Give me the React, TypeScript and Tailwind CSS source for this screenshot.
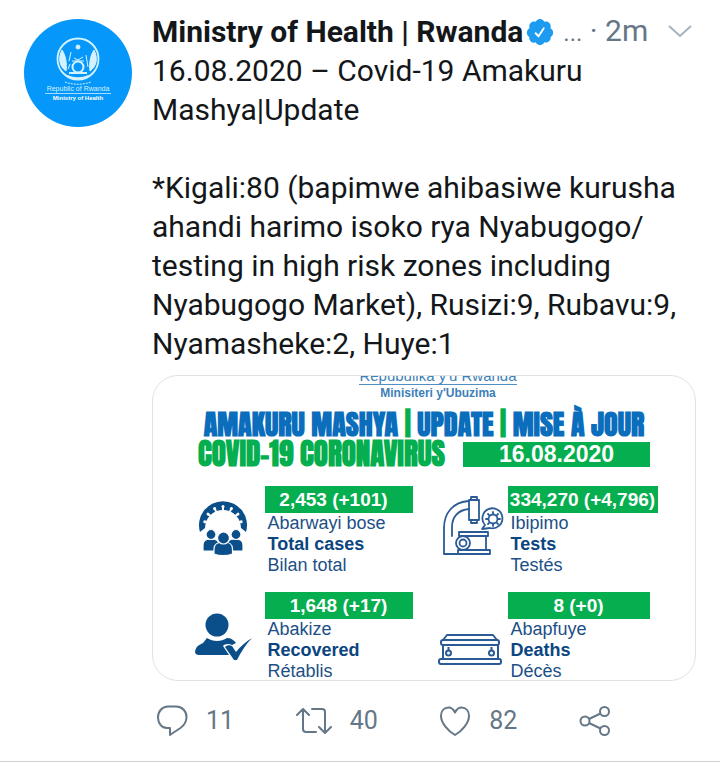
import type { ReactElement, ReactNode } from "react";

interface Stat {
  readonly id: string;
  readonly count: string;
  readonly barWidth: string;
  readonly kinyarwanda: string;
  readonly english: string;
  readonly french: string;
  readonly icon: ReactElement;
}

function IconFrame({ children }: { readonly children: ReactNode }): ReactElement {
  return (
    <svg aria-hidden="true" viewBox="0 0 70 84" className="h-[84px] w-[70px]" fill="none">
      {children}
    </svg>
  );
}

function CasesIcon(): ReactElement {
  const spikes = [-80, -54, -27, 0, 27, 54, 80];
  return (
    <IconFrame>
      <path d="M5 46a24 24 0 1 1 46 0l-5-4a18 18 0 1 0-36 0z" fill="#0b4f8a" />
      {spikes.map((angle) => (
        <g key={angle} transform={`rotate(${angle} 28 39)`}>
          <path d="M28 24v-3" stroke="#fff" strokeWidth="2" />
          <circle cx="28" cy="20.500" r="1.500" fill="#fff" />
        </g>
      ))}
      <g fill="#0b4f8a" stroke="#fff" strokeWidth="1.200">
        <path d="M8 65v-6c0-4 3-6 8-6s8 2 8 6v6zM32 65v-6c0-4 3-6 8-6s8 2 8 6v6z" />
        <circle cx="16" cy="48.500" r="5" />
        <circle cx="41" cy="48.500" r="5" />
        <path d="M19 68v-5c0-5 3-7 9.500-7s9 2 9 7v5c-6 2-13 2-18.500 0z" />
        <circle cx="28.500" cy="52" r="6" />
      </g>
    </IconFrame>
  );
}

function MicroscopeIcon(): ReactElement {
  return (
    <IconFrame>
      <g stroke="#2a5b96" strokeWidth="1.800" strokeLinejoin="round" strokeLinecap="round">
        <path d="M31 15C15 16 6 27 6 42v26h14M31 23c-11 1-17 8-17 18v9" />
        <path d="M31 14h10v20H31zM33 14v-3h6v3M33 34v3h6v-3" />
        <path d="M21 46h29v4H21zM24 50h24v14H24M20 64h32v4H20z" />
        <circle cx="25" cy="57" r="7" fill="#fff" />
        <circle cx="25" cy="57" r="3.500" />
        <path d="M44 43l3-4a10 10 0 1 1 5 3z" />
        <circle cx="55" cy="33" r="4.500" />
        <path d="M55 28v-2M55 40v-2M50 33h-2M62 33h-2M51 29l-1-1M60 38l-1-1M51 37l-1 1M60 28l-1 1" />
      </g>
    </IconFrame>
  );
}

function RecoveredIcon(): ReactElement {
  return (
    <IconFrame>
      <g fill="#0b4f8a">
        <circle cx="22" cy="33" r="11.500" />
        <path d="M12 46c6 4 14 4 20 0 4 0 7 2 9 5l-4 2c-3-2-8-1-9 1l6 9H4c-2 0-4-1-4-3 1-6 4-7 8-9z" />
        <path d="M30 55c2-2 5-2 7-1l4 6c4-5 9-10 16-14-6 6-11 14-15 22h-3z" />
      </g>
    </IconFrame>
  );
}

function CoffinIcon(): ReactElement {
  return (
    <IconFrame>
      <g stroke="#2a5b96" strokeWidth="2" strokeLinejoin="round">
        <path d="M9 43h46l4 5H5z" />
        <rect x="3" y="48" width="58" height="5" rx="2" />
        <path d="M5 53v14M60 53v14" />
        <rect x="1" y="67" width="62" height="5" rx="2" />
        <circle cx="10.500" cy="61" r="2.500" />
        <circle cx="53.500" cy="61" r="2.500" />
        <path d="M10.500 55v4M53.500 55v4" />
      </g>
    </IconFrame>
  );
}

const STATS: readonly Stat[] = [
  {
    id: "cases",
    count: "2,453 (+101)",
    barWidth: "w-[148px] pr-[10px]",
    kinyarwanda: "Abarwayi bose",
    english: "Total cases",
    french: "Bilan total",
    icon: <CasesIcon />,
  },
  {
    id: "tests",
    count: "334,270 (+4,796)",
    barWidth: "w-[150px]",
    kinyarwanda: "Ibipimo",
    english: "Tests",
    french: "Testés",
    icon: <MicroscopeIcon />,
  },
  {
    id: "recovered",
    count: "1,648 (+17)",
    barWidth: "w-[148px]",
    kinyarwanda: "Abakize",
    english: "Recovered",
    french: "Rétablis",
    icon: <RecoveredIcon />,
  },
  {
    id: "deaths",
    count: "8 (+0)",
    barWidth: "w-[142px]",
    kinyarwanda: "Abapfuye",
    english: "Deaths",
    french: "Décès",
    icon: <CoffinIcon />,
  },
];

function StatBlock({ stat }: { readonly stat: Stat }): ReactElement {
  return (
    <div className="flex h-[106px]">
      {stat.icon}
      <div className="text-[18px] leading-[21px] text-[#1c4f86]">
        <p
          className={`flex h-[27px] items-center justify-center bg-[#05ae4e] text-[19px] font-bold whitespace-nowrap text-white ${stat.barWidth}`}
        >
          {stat.count}
        </p>
        <p className="pl-[3px]">{stat.kinyarwanda}</p>
        <p className="pl-[3px] font-bold text-[#0b4580]">{stat.english}</p>
        <p className="pl-[3px]">{stat.french}</p>
      </div>
    </div>
  );
}

function Bulletin(): ReactElement {
  return (
    <section
      aria-label="Covid-19 bulletin"
      className="mt-3 flex h-[306px] flex-col items-center overflow-hidden rounded-[26px] border border-[#dfe3e6] font-['Liberation_Sans',Arial,sans-serif]"
    >
      <div className="ml-7 flex h-[9px] shrink-0 items-end overflow-hidden border-b border-[#4f8fc4] text-[15px] leading-[17px] text-[#3d7fb8]">
        Repubulika y'u Rwanda
      </div>
      <p className="ml-7 text-[12px] leading-4 font-bold text-[#3d7fb8]">Minisiteri y'Ubuzima</p>
      <h2 className="mt-2 font-[Impact,Anton,Oswald,sans-serif] text-[28px] leading-[30px] font-bold whitespace-nowrap text-[#0a6ebd]">
        AMAKURU MASHYA <span className="text-[#05ae4e]">|</span> UPDATE{" "}
        <span className="text-[#05ae4e]">|</span> MISE À JOUR
      </h2>
      <div className="flex w-[452px] items-center justify-between">
        <h3 className="font-[Impact,Anton,Oswald,sans-serif] text-[29px] leading-[30px] font-bold whitespace-nowrap text-[#05ae4e]">
          COVID-19 CORONAVIRUS
        </h3>
        <p className="w-[187px] bg-[#05ae4e] text-center text-[23px] leading-[25px] font-bold text-white">16.08.2020</p>
      </div>
      <div className="mt-[17px] ml-1 grid grid-cols-[218px_220px] gap-x-[25px]">
        {STATS.map((stat) => (
          <StatBlock key={stat.id} stat={stat} />
        ))}
      </div>
    </section>
  );
}

function Avatar(): ReactElement {
  return (
    <div className="mt-[7px] flex size-[108px] shrink-0 flex-col items-center rounded-full bg-[#0697fb] pt-[18px] font-['Liberation_Sans',Arial,sans-serif] whitespace-nowrap text-white">
      <svg aria-hidden="true" viewBox="0 0 48 48" className="size-12" fill="none" stroke="#d5f3ff">
        <circle cx="24" cy="22" r="20.500" strokeWidth="1.800" />
        <path d="M8 13c-4 8-3 16 4 21 1-7 0-15-4-21zM40 13c4 8 3 16-4 21-1-7 0-15 4-21z" fill="#d5f3ff" strokeWidth="1" />
        <path d="M13 39c7 3 15 3 22 0M15 36h18" strokeWidth="2" />
        <path d="M11 45c8 3 18 3 26 0" strokeWidth="1" strokeDasharray="2 1" />
        <circle cx="24" cy="10" r="2" fill="#d5f3ff" />
        <circle cx="24" cy="30" r="5.500" strokeWidth="2" />
        <path d="M18 24h12M20 21l4 2 5-3M16 27l-2 5M32 18l2 12M17 15l-2 9" strokeWidth="1" />
      </svg>
      <p className="border-b border-[#a6dcff] px-[2px] text-[7px] leading-2 text-[#d5f3ff]">Republic of Rwanda</p>
      <p className="text-[6px] leading-2 font-bold">Ministry of Health</p>
    </div>
  );
}

function VerifiedBadge(): ReactElement {
  return (
    <svg role="img" aria-label="Verified account" viewBox="0 0 24 24" className="ml-[2px] size-[30px] shrink-0">
      <path
        fill="#1d9bf0"
        d="M22.500 12.500c0-1.580-.875-2.950-2.148-3.600.154-.435.238-.905.238-1.400 0-2.210-1.710-3.998-3.818-3.998-.47 0-.92.084-1.336.250C14.818 2.415 13.510 1.500 12 1.500s-2.816.917-3.437 2.250c-.415-.165-.866-.250-1.336-.250-2.110 0-3.818 1.790-3.818 4 0 .494.083.964.237 1.400-1.272.650-2.147 2.018-2.147 3.600 0 1.495.782 2.798 1.942 3.486-.020.170-.032.340-.032.514 0 2.210 1.708 4 3.818 4 .470 0 .920-.086 1.335-.250.620 1.334 1.926 2.250 3.437 2.250 1.512 0 2.818-.916 3.437-2.250.415.163.865.248 1.336.248 2.110 0 3.818-1.790 3.818-4 0-.174-.012-.344-.033-.513 1.158-.687 1.943-1.990 1.943-3.484z"
      />
      <path d="M8.500 13l2.300 2.400L15 9" fill="none" stroke="#fff" strokeWidth="1.500" strokeLinecap="round" />
    </svg>
  );
}

interface ActionProps {
  readonly label: string;
  readonly count?: string;
  readonly children: ReactNode;
}

function Action({ label, count, children }: ActionProps): ReactElement {
  return (
    <button type="button" aria-label={label} className="flex items-center gap-[18px]">
      {children}
      {count && <span>{count}</span>}
    </button>
  );
}

function Actions(): ReactElement {
  return (
    <footer className="flex h-20 items-center justify-between pr-[85px] pl-1 text-[25px] leading-8 text-[#657786]">
      <Action label="Reply" count="11">
        <svg viewBox="0 0 32 32" className="size-8" fill="none" stroke="currentColor" strokeWidth="2" strokeLinejoin="round">
          <path d="M12 1.500h8c6 0 10.500 4.500 10.500 10.500 0 5-2 8-6 11-3 2-7 4.500-10.500 7v-7h-3C5.500 23 2 18 2 12.500 2 6.500 6 1.500 12 1.500z" />
        </svg>
      </Action>
      <Action label="Retweet" count="40">
        <svg viewBox="0 0 36 32" className="h-8 w-9" fill="none" stroke="currentColor" strokeWidth="2" strokeLinecap="round" strokeLinejoin="round">
          <path d="M1 10l6-6 6 6M7 4v20c0 2 1 3 3 3h10M16 4h10c2 0 3 1 3 3v20M23 22l6 6 6-6" />
        </svg>
      </Action>
      <Action label="Like" count="82">
        <svg viewBox="0 0 32 32" className="size-8" fill="none" stroke="currentColor" strokeWidth="2" strokeLinejoin="round">
          <path d="M16 30C9 26 2 18 2 11c0-5 3-8.500 7.500-8.500 3 0 5 2 6.500 5 1.500-3 3.500-5 6.500-5C27 2.500 30 6 30 11c0 7-7 15-14 19z" />
        </svg>
      </Action>
      <Action label="Share">
        <svg viewBox="0 0 32 32" className="size-8" fill="none" stroke="currentColor" strokeWidth="2">
          <circle cx="6" cy="16" r="4.500" />
          <circle cx="25.500" cy="6.500" r="4.500" />
          <circle cx="25.500" cy="25.500" r="4.500" />
          <path d="M10 14l11.500-5.500M10 18l11.500 5.500" />
        </svg>
      </Action>
    </footer>
  );
}

export default function App(): ReactElement {
  return (
    <main className="bg-white font-[Roboto,sans-serif] text-[#14171a]">
      <article className="flex gap-5 border-b border-[#cfd1d2] px-6 pt-3">
        <Avatar />
        <div className="min-w-0 flex-1">
          <header className="flex h-[39px] items-center text-[30px] leading-[39px] whitespace-nowrap">
            <h1 className="font-bold">Ministry of Health | Rwanda</h1>
            <VerifiedBadge />
            <span className="ml-2 text-[#657786]">
              <span className="text-[24px]">...</span> · 2m
            </span>
            <button type="button" aria-label="More options" className="ml-auto text-[#a5b3be]">
              <svg viewBox="0 0 32 20" className="h-5 w-8" fill="none" stroke="currentColor" strokeWidth="2">
                <path d="M5 4l11 10L27 4" />
              </svg>
            </button>
          </header>
          <p className="text-[30px] leading-[39px] whitespace-pre-line">
            {"16.08.2020 – Covid-19 Amakuru\nMashya|Update\n\n"}
            {"*Kigali:80 (bapimwe ahibasiwe kurusha\nahandi harimo isoko rya Nyabugogo/\n"}
            {"testing in high risk zones including\nNyabugogo Market), Rusizi:9, Rubavu:9,\nNyamasheke:2, Huye:1"}
          </p>
          <Bulletin />
          <Actions />
        </div>
      </article>
    </main>
  );
}
